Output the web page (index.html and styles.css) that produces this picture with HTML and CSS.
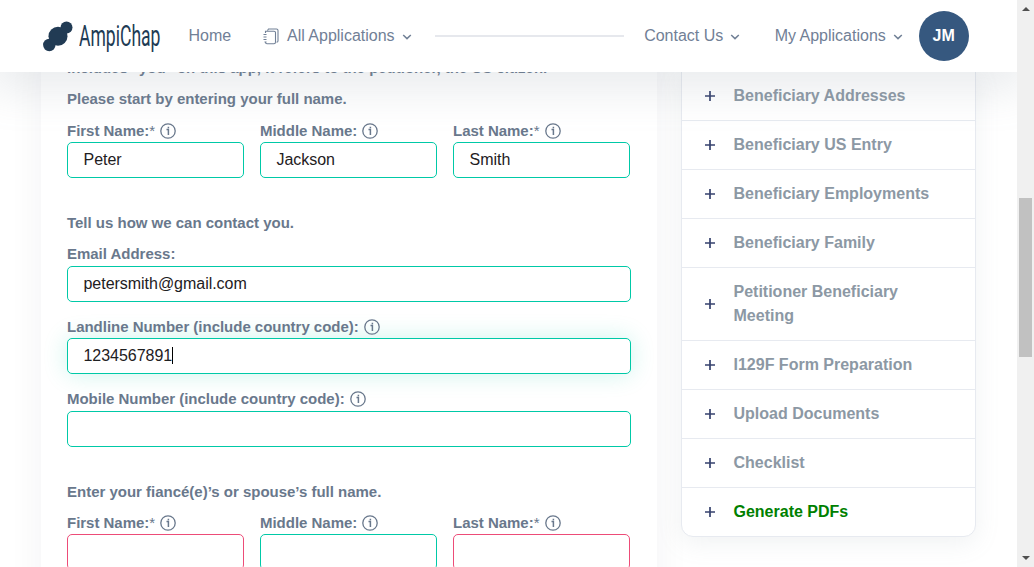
FILE: index.html
```
<!DOCTYPE html>
<html lang="en">
<head>
<meta charset="utf-8">
<title>AmpiChap</title>
<link rel="stylesheet" href="styles.css">
</head>
<body>
<svg class="defs" width="0" height="0" aria-hidden="true">
  <symbol id="info" viewBox="0 0 16 16"><circle cx="8" cy="8" r="7.2" fill="none" stroke="currentColor" stroke-width="1.3"/><path d="M6.500 6.600H8.400v5.400M8.400 3.700v1.600" fill="none" stroke="currentColor" stroke-width="1.5"/></symbol>
  <symbol id="chev" viewBox="0 0 10 6"><path d="M1.2 1l3.8 3.6L8.8 1" fill="none" stroke="currentColor" stroke-width="1.5"/></symbol>
  <symbol id="plus" viewBox="0 0 10 10"><path d="M0 5h10M5 0v10" fill="none" stroke="currentColor" stroke-width="1.7"/></symbol>
</svg>
<div class="window">
  <div class="page">
    <header class="header">
      <div class="brand">
        <svg class="logo" width="31" height="32" viewBox="0 0 31 32">
          <g fill="#213b54"><circle cx="6.300" cy="24" r="6.200"/><circle cx="15" cy="15.300" r="9.500"/><circle cx="23.500" cy="6.500" r="6"/></g>
        </svg>
        <span class="logo-box"><span class="logo-text">AmpiChap</span></span>
      </div>
      <a class="nav home">Home</a>
      <a class="nav all"><svg class="book" width="16" height="17" viewBox="0 0 16 17"><path d="M4.500 2.500L5.500 1h8q1.500 0 1.500 1.500V13q0 1.200-1.500 1.200M2.500 5V3.200h8.500q1.500 0 1.500 1.300V14q0 1.800-1.500 1.800H4q-1.500 0-1.500-1.500M.5 6.500h3M.5 9h3M.5 11.500h3M1.500 14h2" fill="none" stroke="currentColor" stroke-width="1.100"/></svg>All Applications<svg class="chev" width="10" height="6"><use href="#chev"/></svg></a>
      <span class="rule"></span>
      <a class="nav contact">Contact Us<svg class="chev" width="10" height="6"><use href="#chev"/></svg></a>
      <a class="nav mine">My Applications<svg class="chev" width="10" height="6"><use href="#chev"/></svg></a>
      <span class="avatar">JM</span>
    </header>
    <main class="content">
      <form class="card">
        <p class="heading cut">Includes "you" on this app, it refers to the petitioner, the US citizen.</p>
        <p class="heading first">Please start by entering your full name.</p>
        <div class="row">
          <div class="field"><label class="label">First Name:<i class="star">*</i><svg class="info" width="16" height="16"><use href="#info"/></svg></label><div class="input">Peter</div></div>
          <div class="field"><label class="label">Middle Name:<svg class="info" width="16" height="16"><use href="#info"/></svg></label><div class="input">Jackson</div></div>
          <div class="field"><label class="label">Last Name:<i class="star">*</i><svg class="info" width="16" height="16"><use href="#info"/></svg></label><div class="input">Smith</div></div>
        </div>
        <p class="heading section">Tell us how we can contact you.</p>
        <div class="stack">
          <div class="field"><label class="label">Email Address:</label><div class="input">petersmith@gmail.com</div></div>
          <div class="field"><label class="label">Landline Number (include country code):<svg class="info" width="16" height="16"><use href="#info"/></svg></label><div class="input focused">1234567891<span class="caret"></span></div></div>
          <div class="field mobile"><label class="label">Mobile Number (include country code):<svg class="info" width="16" height="16"><use href="#info"/></svg></label><div class="input"></div></div>
        </div>
        <p class="heading section">Enter your fiancé(e)’s or spouse’s full name.</p>
        <div class="row">
          <div class="field"><label class="label">First Name:<i class="star">*</i><svg class="info" width="16" height="16"><use href="#info"/></svg></label><div class="input invalid"></div></div>
          <div class="field"><label class="label">Middle Name:<svg class="info" width="16" height="16"><use href="#info"/></svg></label><div class="input"></div></div>
          <div class="field"><label class="label">Last Name:<i class="star">*</i><svg class="info" width="16" height="16"><use href="#info"/></svg></label><div class="input invalid"></div></div>
        </div>
      </form>
      <aside class="steps">
        <div class="step"><svg class="plus" width="10" height="10"><use href="#plus"/></svg><span>Beneficiary Addresses</span></div>
        <div class="step"><svg class="plus" width="10" height="10"><use href="#plus"/></svg><span>Beneficiary US Entry</span></div>
        <div class="step"><svg class="plus" width="10" height="10"><use href="#plus"/></svg><span>Beneficiary Employments</span></div>
        <div class="step"><svg class="plus" width="10" height="10"><use href="#plus"/></svg><span>Beneficiary Family</span></div>
        <div class="step"><svg class="plus" width="10" height="10"><use href="#plus"/></svg><span>Petitioner Beneficiary Meeting</span></div>
        <div class="step"><svg class="plus" width="10" height="10"><use href="#plus"/></svg><span>I129F Form Preparation</span></div>
        <div class="step"><svg class="plus" width="10" height="10"><use href="#plus"/></svg><span>Upload Documents</span></div>
        <div class="step"><svg class="plus" width="10" height="10"><use href="#plus"/></svg><span>Checklist</span></div>
        <div class="step generate"><svg class="plus" width="10" height="10"><use href="#plus"/></svg><span>Generate PDFs</span></div>
      </aside>
    </main>
  </div>
  <div class="scrollbar"><span class="arrow up"></span><span class="thumb"></span><span class="arrow down"></span></div>
</div>
</body>
</html>
```
FILE: styles.css
```
* { box-sizing: border-box; }
body { margin: 0; overflow: hidden; background: #fff; font: 16px/24px "Liberation Sans", Arial, sans-serif; color: #69788c; }
.defs { display: none; }
.window { display: flex; height: 567px; overflow: hidden; }
.page { flex: 1; min-width: 0; display: flex; flex-direction: column; overflow: hidden; }

.header { height: 72px; flex: none; display: flex; align-items: center; padding-left: 43px; background: #fff; box-shadow: 0 10px 40px 10px rgba(140, 152, 164, .175); z-index: 2; }
.brand { flex: none; width: 120px; display: flex; align-items: center; }
.logo { flex: none; margin-top: 1px; }
.logo-box { width: 83px; height: 40px; margin-left: 5px; }
.logo-text { display: block; width: max-content; font: 30px/40px "Roboto", sans-serif; color: #213b54; transform: scaleX(.585); transform-origin: 0 0; }
.nav { display: flex; align-items: center; white-space: nowrap; color: #718096; }
.home { margin-left: 25.500px; width: 74px; }
.book { margin-right: 8.500px; }
.chev { margin: 2px 0 0 7px; }
.rule { width: 189px; height: 2px; background: #e6e8ed; margin-left: 23px; }
.contact { margin-left: 20.500px; width: 130.500px; }
.mine { width: 144px; }
.avatar { flex: none; width: 50px; height: 50px; border-radius: 50%; background: #36587f; color: #fff; font-weight: bold; text-align: center; line-height: 50px; }

.content { flex: 1; min-height: 0; display: flex; align-items: flex-start; padding-left: 41px; }
.card { width: 616px; height: 560px; padding: 0 26px; margin-top: -20px; background: #fff; box-shadow: 0 0 35px rgba(31, 45, 61, .05); }
.heading { margin: 0; font-size: 15px; font-weight: bold; line-height: 24px; letter-spacing: -.01px; white-space: nowrap; }
.cut { margin-top: 4px; }
.first { margin-top: 7px; margin-bottom: 8px; }
.section { margin: 33px 0 7px; }
.row { display: flex; gap: 16px; }
.row .field { width: 177px; }
.stack { display: flex; flex-direction: column; gap: 13px; width: 564px; }
.label { display: flex; align-items: center; height: 23px; font-size: 15px; font-weight: bold; letter-spacing: -.02px; white-space: nowrap; }
.stack .label, .stack + .section + .row .label { padding-top: 1px; }
.stack .field:first-child .label { height: 24px; padding-top: 0; }
.star { font-weight: normal; font-style: normal; }
.info { margin-left: 5px; }
.input { display: flex; align-items: center; height: 36px; padding: 0 15.500px 1px; border: 1px solid #00c9a7; border-radius: 5px; background: #fff; color: #1e2022; letter-spacing: -.03px; }
.mobile .label { height: 24px; padding-top: 0; }
.focused { box-shadow: 0 0 25px rgba(0, 201, 167, .2); }
.invalid { border-color: #ed4c78; }
.caret { width: 1px; height: 17px; background: #000; }

.steps { width: 295px; height: 466px; margin: -1px 0 0 24px; border: 1px solid #e7eaf0; border-radius: 0 0 12px 12px; background: #fff; box-shadow: 0 6px 24px rgba(140, 152, 164, .13); }
.step { display: flex; align-items: center; padding: 12px 28px 12px 23px; border-bottom: 1px solid #e7eaf0; font-weight: bold; color: #8c98a4; }
.step:last-child { border: 0; }
.plus { flex: none; margin-right: 18.500px; color: #36426e; }
.generate { color: #008000; }
.generate .plus { color: #36426e; }

.scrollbar { width: 17px; display: flex; flex-direction: column; align-items: center; background: #f0f0f0; }
.arrow { border: 4px solid transparent; }
.up { margin-top: 3px; border-bottom-color: #505050; }
.thumb { width: 13px; height: 159px; margin-top: 187px; background: #c1c1c1; }
.down { margin-top: 199px; border-top-color: #505050; }
```
